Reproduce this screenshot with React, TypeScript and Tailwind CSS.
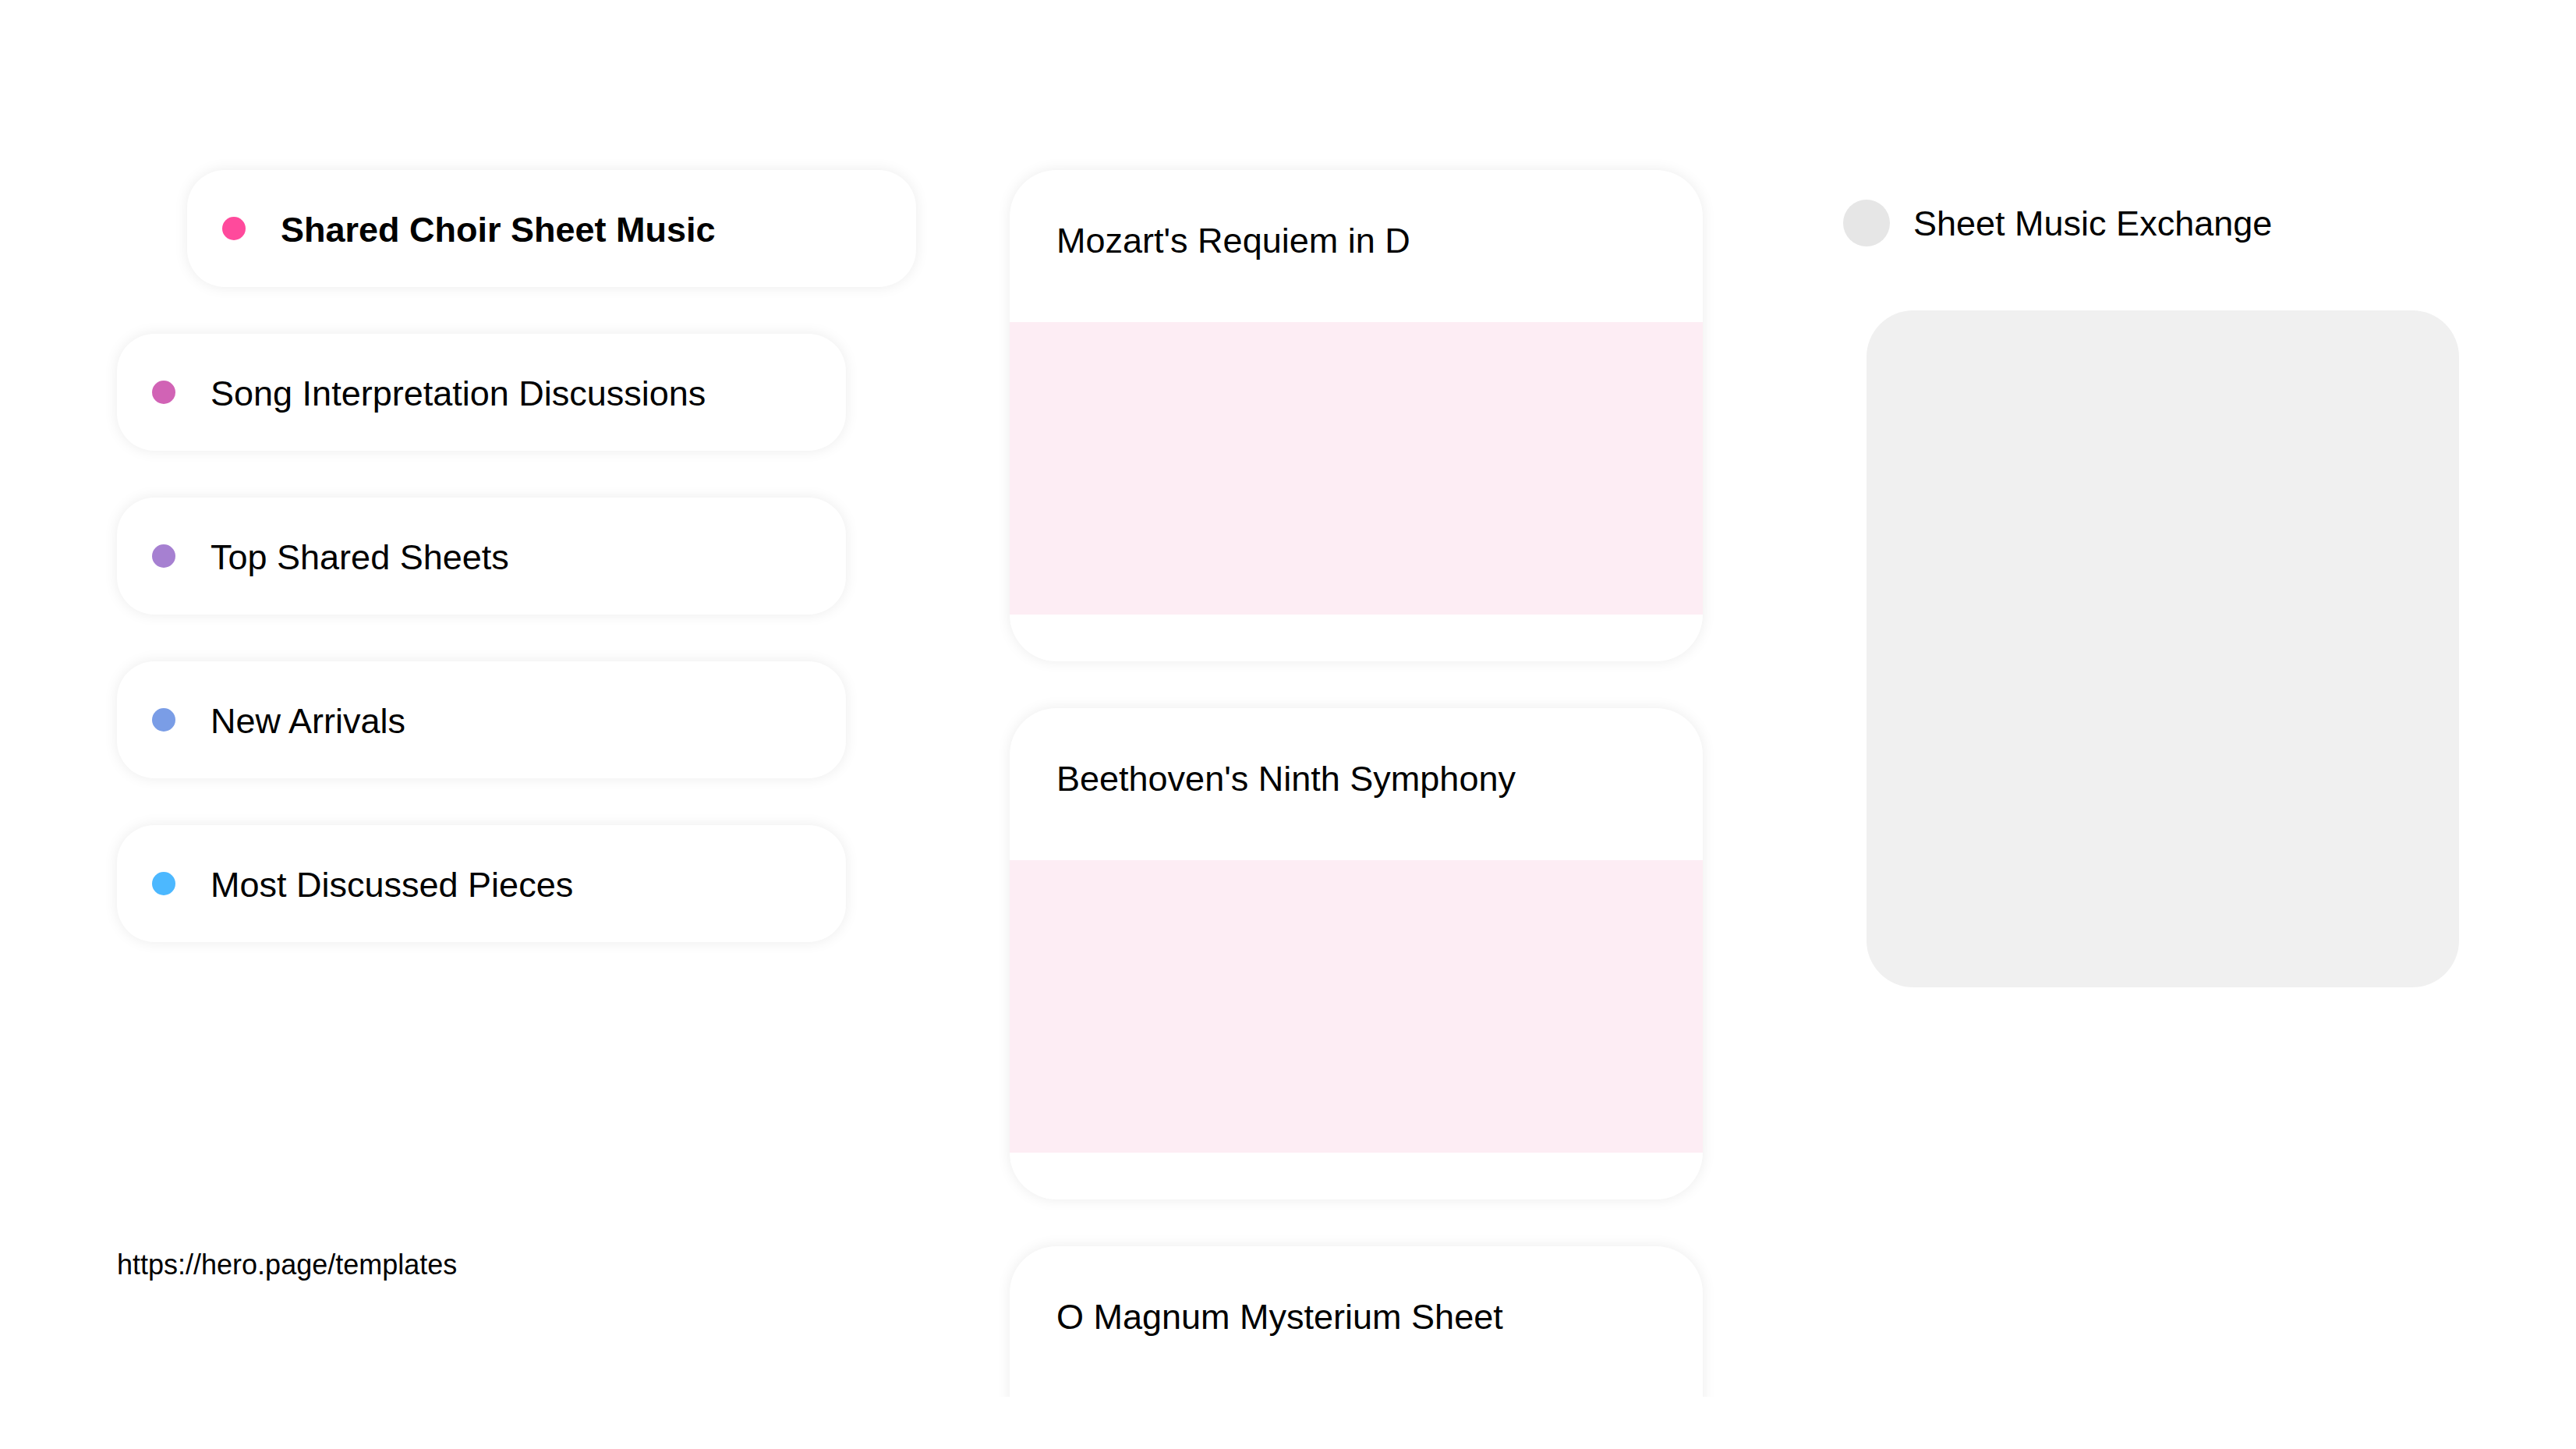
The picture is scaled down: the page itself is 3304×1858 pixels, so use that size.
import React from "react";

const pills = [
  { label: "Shared Choir Sheet Music", color: "bg-[#ff4a9c]", active: true },
  { label: "Song Interpretation Discussions", color: "bg-[#d163b5]", active: false },
  { label: "Top Shared Sheets", color: "bg-[#a680d1]", active: false },
  { label: "New Arrivals", color: "bg-[#7a9de6]", active: false },
  { label: "Most Discussed Pieces", color: "bg-[#4cb8ff]", active: false },
];

const cards = ["Mozart's Requiem in D", "Beethoven's Ninth Symphony", "O Magnum Mysterium Sheet"];

export default function App() {
  return (
    <div
      className="h-[1791px] overflow-hidden bg-white flex items-start pt-[218px] pl-[150px] text-black"
      style={{ fontFamily: '"Liberation Sans", Arial, sans-serif' }}
    >
      {/* Left column */}
      <div className="w-[1025px] shrink-0 flex flex-col">
        <div className="flex flex-col gap-[60px]">
          {pills.map((p) => (
            <div
              key={p.label}
              className={`${p.active ? "ml-[90px]" : ""} w-[935px] h-[150px] rounded-[48px] bg-white shadow-[0_0_18px_rgba(0,0,0,0.08)] flex items-center pl-[45px]`}
            >
              <span className={`w-[30px] h-[30px] rounded-full ${p.color} shrink-0`} />
              <span className={`ml-[45px] pt-[3px] text-[45px] leading-[52px] ${p.active ? "font-bold" : ""}`}>
                {p.label}
              </span>
            </div>
          ))}
        </div>
        <div className="mt-[393px] text-[36px] leading-[41px]">https://hero.page/templates</div>
      </div>

      {/* Middle column */}
      <div className="ml-[120px] w-[889px] shrink-0 flex flex-col gap-[60px]">
        {cards.map((c) => (
          <div
            key={c}
            className="h-[630px] rounded-[60px] bg-white shadow-[0_0_18px_rgba(0,0,0,0.08)] overflow-hidden flex flex-col"
          >
            <div className="h-[195px] pt-[65px] px-[60px] text-[45px] leading-[52px]">{c}</div>
            <div className="h-[375px] bg-[#fdedf4]" />
          </div>
        ))}
      </div>

      {/* Right column */}
      <div className="ml-[180px] w-[800px] shrink-0 flex flex-col">
        <div className="mt-[38px] h-[60px] flex items-center gap-[30px]">
          <span className="w-[60px] h-[60px] rounded-full bg-[#e6e6e6] shrink-0" />
          <span className="pt-[2px] text-[45px] leading-[52px]">Sheet Music Exchange</span>
        </div>
        <div className="ml-[30px] mt-[82px] w-[760px] h-[868px] rounded-[60px] bg-[#f0f0f0]" />
      </div>
    </div>
  );
}
